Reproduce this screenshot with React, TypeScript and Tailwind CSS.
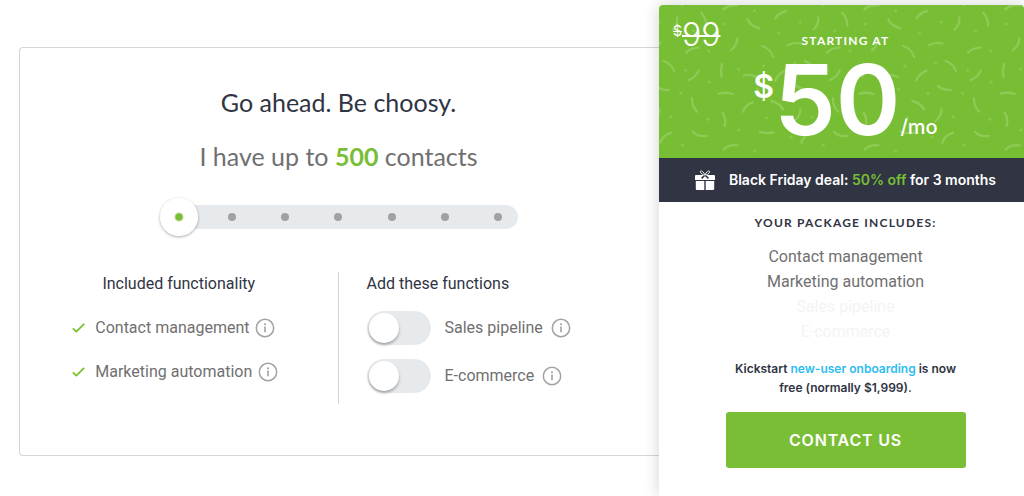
import { useState } from "react";

const STEPS = [500, 1000, 2500, 5000, 10000, 25000, 50000];

const ARCS = [
  "M25 38Q40 56 40 78",
  "M92 27Q106 14 132 15",
  "M247 55Q258 38 280 33",
  "M163 58Q172 78 198 85",
  "M362 88Q377 76 376 52",
  "M285 136Q302 126 325 130",
  "M402 158Q414 144 440 143",
  "M114 150Q131 138 133 115",
  "M208 138Q232 146 240 170",
  "M335 183Q359 192 366 213",
  "M88 192Q81 212 86 230",
  "M410 240Q432 232 440 212",
  "M247 242Q254 222 277 212",
  "M312 258Q328 272 350 270",
  "M152 227Q168 221 192 231",
  "M77 281Q98 275 119 282",
  "M420 295Q419 318 435 335",
  "M235 303Q260 309 270 328",
  "M322 328Q322 350 305 362",
  "M89 338Q101 358 95 378",
  "M325 428Q332 406 357 398",
  "M423 395Q437 411 463 408",
  "M92 448Q108 433 134 436",
  "M200 395Q222 403 242 397",
  "M150 335Q156 314 180 307",
];

const DOTS = [
  [94, 72], [322, 66], [425, 92], [257, 100], [305, 188], [212, 198], [401, 211],
  [49, 246], [193, 267], [282, 280], [386, 280], [357, 350], [45, 358], [137, 390],
  [137, 208], [295, 412], [391, 435], [185, 452], [48, 153], [220, 353],
];

function Confetti() {
  const tiles = [-846, -423, 0, 423].flatMap((x) => [-420, 0].map((y) => [x, y]));
  return (
    <svg
      className="absolute inset-0 h-full w-full"
      viewBox="-525 15 1095 459"
      preserveAspectRatio="xMinYMin slice"
      aria-hidden="true"
    >
      <defs>
        <g id="confetti">
          {ARCS.map((d) => (
            <path key={d} d={d} fill="none" stroke="#8eca55" strokeWidth="7" strokeLinecap="round" />
          ))}
          {DOTS.map(([x, y]) => (
            <circle key={`${x}-${y}`} cx={x} cy={y} r="4.5" fill="#89c84d" />
          ))}
        </g>
      </defs>
      {tiles.map(([x, y]) => (
        <use key={`${x}-${y}`} href="#confetti" x={x} y={y} />
      ))}
    </svg>
  );
}

function GiftIcon() {
  return (
    <svg className="h-5 w-5 shrink-0" viewBox="0 0 20 20" aria-hidden="true">
      <path
        fill="#fff"
        d="M1 5h18q1 0 1 1v4H0V6q0-1 1-1ZM.8 11h8.500v9H2q-1.200 0-1.200-1.200ZM10.700 11h8.500v7.800q0 1.200-1.200 1.200h-7.300Z"
      />
      <path d="M10 5L6.600 8.400M10 5L13.400 8.400" stroke="#303443" strokeWidth="1.600" />
      <g fill="#303443" stroke="#e8e9ec" strokeWidth="1">
        <path d="M10 5C7.800 5 5.400 3.400 5.400 1.500C5.400 -.1 8.800 1.600 10 5Z" />
        <path d="M10 5C12.200 5 14.600 3.400 14.600 1.500C14.600 -.1 11.200 1.600 10 5Z" />
      </g>
    </svg>
  );
}

function CheckIcon() {
  return (
    <svg className="h-3 w-[13px] shrink-0" viewBox="0 0 13 12" aria-hidden="true">
      <path d="M.8 6.300L4.400 9.600L12.200 1.800" fill="none" stroke="#76c22d" strokeWidth="1.800" />
    </svg>
  );
}

function InfoButton({ topic }: { topic: string }) {
  return (
    <button type="button" aria-label={`About ${topic}`} className="shrink-0">
      <svg className="h-5 w-5" viewBox="0 0 20 20" aria-hidden="true">
        <circle cx="10" cy="10" r="8.700" fill="none" stroke="#a3a3a3" strokeWidth="1.500" />
        <path d="M10 8.500V14.300" stroke="#a0a0a0" strokeWidth="1.600" />
        <circle cx="10" cy="6.200" r="1" fill="#a0a0a0" />
      </svg>
    </button>
  );
}

function Included({ name }: { name: string }) {
  return (
    <li className="flex items-center">
      <CheckIcon />
      <span className="mr-1.5 ml-2.5">{name}</span>
      <InfoButton topic={name} />
    </li>
  );
}

function Toggle({ name, on, onChange }: { name: string; on: boolean; onChange: (on: boolean) => void }) {
  return (
    <li className="flex items-center">
      <label className="flex items-center gap-3.5">
        <input
          type="checkbox"
          role="switch"
          checked={on}
          onChange={(e) => onChange(e.target.checked)}
          className="flex h-[34px] w-16 shrink-0 appearance-none items-center rounded-full bg-[#e7eaed] px-0.5 before:h-[30px] before:w-[30px] before:rounded-full before:bg-white before:shadow-[0_2px_3px_rgba(0,0,0,0.3)] before:content-[''] checked:justify-end checked:bg-[#78be35]"
        />
        {name}
      </label>
      <span className="ml-2 flex">
        <InfoButton topic={name} />
      </span>
    </li>
  );
}

export default function App() {
  const [step, setStep] = useState(0);
  const [sales, setSales] = useState(false);
  const [shop, setShop] = useState(false);

  return (
    <main className="flex min-h-screen overflow-hidden bg-white pt-[5px] pl-[19px] font-['Roboto',sans-serif] text-base text-[#707070]">
      <section className="mt-[42px] mb-10 flex flex-1 flex-col items-center self-start rounded-l-sm border border-r-0 border-[#d5d5d5] pt-[38px] pr-0.5 pb-[51px]">
        <h1 className="font-['Lato',sans-serif] text-[25px] leading-8 text-[#303443]">Go ahead. Be choosy.</h1>
        <p className="mt-[22px] font-['Lato',sans-serif] text-[25px] leading-8">
          I have up to <strong className="font-bold text-[#78be35]">{STEPS[step].toLocaleString("en-US")}</strong> contacts
        </p>

        <div className="mt-[26px] grid w-[358px] items-center">
          <div className="col-start-1 row-start-1 flex h-6 items-center justify-between rounded-full bg-[#e7eaed] px-[15px]">
            {STEPS.map((s) => (
              <span key={s} className="h-2 w-2 rounded-full bg-[#a0a1a4]" />
            ))}
          </div>
          <input
            type="range"
            aria-label="Number of contacts"
            min={0}
            max={6}
            value={step}
            onChange={(e) => setStep(Number(e.target.value))}
            className="col-start-1 row-start-1 h-[38px] w-full appearance-none bg-transparent [&::-webkit-slider-thumb]:h-[38px] [&::-webkit-slider-thumb]:w-[38px] [&::-webkit-slider-thumb]:appearance-none [&::-webkit-slider-thumb]:rounded-full [&::-webkit-slider-thumb]:bg-[radial-gradient(circle,#78be35_3px,#ffffff_5px)] [&::-webkit-slider-thumb]:shadow-[0_1px_3px_rgba(0,0,0,0.35)]"
          />
        </div>

        <div className="mt-9 grid w-full grid-cols-2">
          <div className="flex h-[132px] flex-col items-center border-r border-[#d5d5d5]">
            <h2 className="leading-6 text-[#303443]">Included functionality</h2>
            <ul className="mt-5 flex w-[213px] flex-col gap-5">
              <Included name="Contact management" />
              <Included name="Marketing automation" />
            </ul>
          </div>
          <div className="pl-7">
            <h2 className="leading-6 text-[#303443]">Add these functions</h2>
            <ul className="mt-[15px] flex flex-col gap-3.5">
              <Toggle name="Sales pipeline" on={sales} onChange={setSales} />
              <Toggle name="E-commerce" on={shop} onChange={setShop} />
            </ul>
          </div>
        </div>
      </section>

      <aside className="flex w-[365px] shrink-0 flex-col rounded-t-sm bg-white text-center shadow-[0_0_16px_rgba(0,0,0,0.18)]">
        <header className="relative h-[153px] rounded-t-sm bg-[#78be35] font-['Inter',sans-serif] text-white">
          <Confetti />
          <del className="absolute top-3 left-3.5 flex items-start no-underline">
            <span className="mt-1 text-sm leading-5 line-through">$</span>
            <span className="text-[32px] leading-9 font-light line-through decoration-2">99</span>
          </del>
          <div className="relative flex flex-col items-center pt-7 pl-2">
            <p className="font-['Lato',sans-serif] text-xs leading-4 font-bold tracking-widest">STARTING AT</p>
            <p className="flex items-start">
              <span className="mt-4 text-[32px] leading-[44px] font-semibold">$</span>
              <span className="text-[98px] leading-[102px] font-semibold">50</span>
              <span className="mt-[66px] text-xl leading-6 font-medium">/mo</span>
            </p>
          </div>
        </header>

        <div className="flex h-11 items-center justify-center gap-3.5 bg-[#303443] pl-2 font-['Inter',sans-serif] text-sm font-semibold text-white">
          <GiftIcon />
          <p>
            Black Friday deal: <span className="text-[#78be35]">50% off</span> for 3 months
          </p>
        </div>

        <div className="flex flex-col items-center pt-3 pb-7 pl-2">
          <h2 className="font-['Lato',sans-serif] text-xs leading-[18px] font-bold tracking-widest text-[#303443]">
            YOUR PACKAGE INCLUDES:
          </h2>
          <ul className="mt-3 leading-[25px]">
            <li>Contact management</li>
            <li>Marketing automation</li>
            <li className={sales ? "" : "text-[#f4f4f4]"}>Sales pipeline</li>
            <li className={shop ? "" : "text-[#f4f4f4]"}>E-commerce</li>
          </ul>
          <p className="mt-[15px] w-60 font-['Inter',sans-serif] text-xs leading-[19px] font-semibold text-[#303443]">
            Kickstart{" "}
            <a href="#onboarding" className="text-[#2dbdf0]">
              new-user onboarding
            </a>{" "}
            is now free (normally $1,999).
          </p>
          <button
            type="button"
            className="mt-[15px] h-14 w-60 rounded-[3px] bg-[#7abe36] font-['Inter',sans-serif] text-base font-semibold tracking-wider text-white"
          >
            CONTACT US
          </button>
        </div>
      </aside>
    </main>
  );
}
